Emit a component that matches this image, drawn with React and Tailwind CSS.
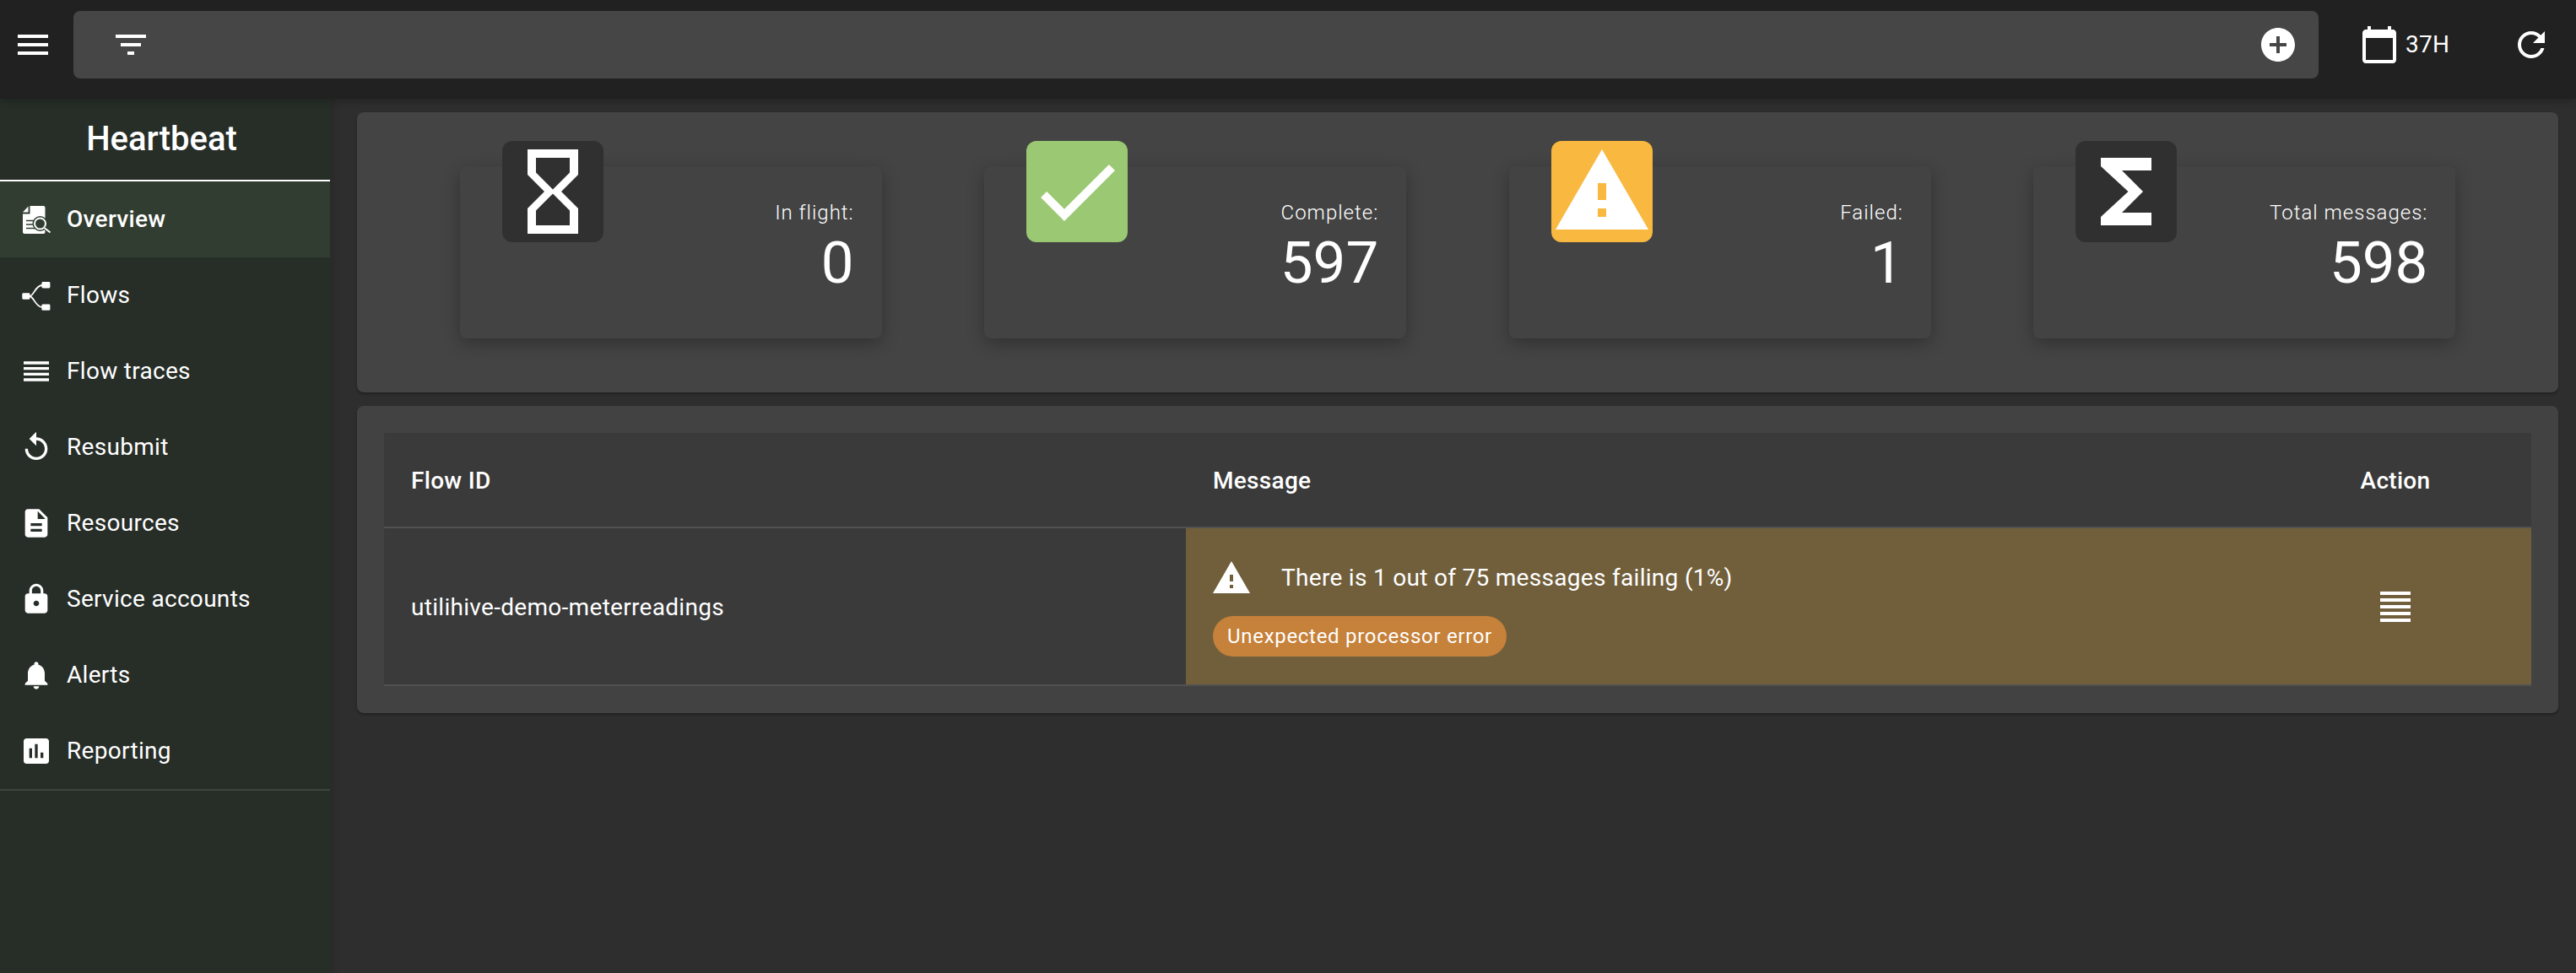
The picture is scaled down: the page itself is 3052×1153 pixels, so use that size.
import React from 'react';

const paths = {
  menu: 'M3 18h18v-2H3v2zm0-5h18v-2H3v2zm0-7v2h18V6H3z',
  filter: 'M10 18h4v-2h-4v2zM3 6v2h18V6H3zm3 7h12v-2H6v2z',
  add: 'M12 2C6.48 2 2 6.48 2 12s4.48 10 10 10 10-4.48 10-10S17.52 2 12 2zm5 11h-4v4h-2v-4H7v-2h4V7h2v4h4v2z',
  calendar: 'M20 3h-1V1h-2v2H7V1H5v2H4c-1.1 0-2 .9-2 2v16c0 1.1.9 2 2 2h16c1.1 0 2-.9 2-2V5c0-1.1-.9-2-2-2zm0 18H4V8h16v13z',
  refresh: 'M17.65 6.35C16.2 4.9 14.21 4 12 4c-4.42 0-7.99 3.58-7.99 8s3.57 8 7.99 8c3.73 0 6.84-2.55 7.73-6h-2.08c-.82 2.33-3.04 4-5.65 4-3.31 0-6-2.69-6-6s2.69-6 6-6c1.66 0 3.14.69 4.22 1.78L13 11h7V4l-2.35 2.35z',
  reorder: 'M3 15h18v-2H3v2zm0 4h18v-2H3v2zm0-8h18V9H3v2zm0-6v2h18V5H3z',
  replay: 'M12 5V1L7 6l5 5V7c3.31 0 6 2.69 6 6s-2.69 6-6 6-6-2.69-6-6H4c0 4.42 3.58 8 8 8s8-3.58 8-8-3.58-8-8-8z',
  description: 'M14 2H6c-1.1 0-1.99.9-1.99 2L4 20c0 1.1.89 2 1.99 2H18c1.1 0 2-.9 2-2V8l-6-6zm2 16H8v-2h8v2zm0-4H8v-2h8v2zm-3-5V3.5L18.5 9H13z',
  lock: 'M18 8h-1V6c0-2.76-2.24-5-5-5S7 3.24 7 6v2H6c-1.1 0-2 .9-2 2v10c0 1.1.9 2 2 2h12c1.1 0 2-.9 2-2V10c0-1.1-.9-2-2-2zm-6 9c-1.1 0-2-.9-2-2s.9-2 2-2 2 .9 2 2-.9 2-2 2zm3.1-9H8.9V6c0-1.71 1.39-3.1 3.1-3.1 1.71 0 3.1 1.39 3.1 3.1v2z',
  bell: 'M12 22c1.1 0 2-.9 2-2h-4c0 1.1.89 2 2 2zm6-6v-5c0-3.07-1.64-5.64-4.5-6.32V4c0-.83-.67-1.5-1.5-1.5s-1.5.67-1.5 1.5v.68C7.63 5.36 6 7.92 6 11v5l-2 2v1h16v-1l-2-2z',
  assessment: 'M19 3H5c-1.1 0-2 .9-2 2v14c0 1.1.9 2 2 2h14c1.1 0 2-.9 2-2V5c0-1.1-.9-2-2-2zM9 17H7v-7h2v7zm4 0h-2V7h2v10zm4 0h-2v-4h2v4z',
  hourglass: 'M6 2v6h.01L6 8.01 10 12l-4 4 .01.01H6V22h12v-5.99h-.01L18 16l-4-4 4-3.99-.01-.01H18V2H6zm10 14.5V20H8v-3.5l4-4 4 4zm-4-5l-4-4V4h8v3.5l-4 4z',
  check: 'M9 16.17L4.83 12l-1.41 1.41L9 19 21 7l-1.41-1.41z',
  warning: 'M1 21h22L12 2 1 21zm12-3h-2v-2h2v2zm0-4h-2v-4h2v4z',
  sigma: 'M18 4H6v2l6.5 6L6 18v2h12v-3h-7l5-5-5-5h7z',
  justify: 'M3 21h18v-2H3v2zm0-4h18v-2H3v2zm0-4h18v-2H3v2zm0-4h18V7H3v2zm0-6v2h18V3H3z',
};

const Icon = ({ name, className }) => (
  <svg viewBox="0 0 24 24" fill="currentColor" className={className}>
    <path d={paths[name]} />
  </svg>
);

const OverviewIcon = () => (
  <svg viewBox="7 6 40 40" className="w-[40px] h-[40px] shrink-0">
    <path d="M11 17.5 17.5 10.5V17.5Z" fill="white" />
    <path d="M19.5 10H35.5Q37.5 10 37.5 12V41Q37.5 43 35.5 43H13Q11 43 11 41V19.5H19.5Z" fill="white" />
    <path d="M15 27.5H25M15 32H23M15 36.5H25" stroke="#313d30" strokeWidth="1.6" />
    <circle cx="31.5" cy="31" r="9" fill="#313d30" />
    <circle cx="31.5" cy="31" r="6.5" fill="none" stroke="white" strokeWidth="2" />
    <path d="M36.5 36 43.5 41.5" stroke="#313d30" strokeWidth="4" />
    <path d="M36.5 36 43.5 41.5" stroke="white" strokeWidth="2" />
  </svg>
);

const FlowsIcon = () => (
  <svg viewBox="7 6 40 40" className="w-[40px] h-[40px] shrink-0">
    <rect x="10.3" y="23.3" width="9.2" height="7.4" rx="1.4" fill="white" />
    <rect x="33.4" y="10" width="10" height="7.4" rx="1.4" fill="white" />
    <rect x="33.4" y="36.4" width="10" height="7.4" rx="1.4" fill="white" />
    <path d="M19 27C24 27 26 14 34 14M19 27C24 27 26 40 34 40" fill="none" stroke="white" strokeWidth="1.8" />
  </svg>
);

const navItems = [
  { label: 'Overview', custom: <OverviewIcon />, active: true },
  { label: 'Flows', custom: <FlowsIcon /> },
  { label: 'Flow traces', icon: 'reorder' },
  { label: 'Resubmit', icon: 'replay' },
  { label: 'Resources', icon: 'description' },
  { label: 'Service accounts', icon: 'lock' },
  { label: 'Alerts', icon: 'bell' },
  { label: 'Reporting', icon: 'assessment' },
];

const stats = [
  { label: 'In flight:', value: '0', icon: 'hourglass', tile: 'bg-[#303030]' },
  { label: 'Complete:', value: '597', icon: 'check', tile: 'bg-[#9bc873]' },
  { label: 'Failed:', value: '1', icon: 'warning', tile: 'bg-[#f9b83f]' },
  { label: 'Total messages:', value: '598', icon: 'sigma', tile: 'bg-[#303030]' },
];

const StatCard = ({ label, value, icon, tile }) => (
  <div className="relative w-[500px] h-[204px] rounded-[8px] bg-[#434343] shadow-[0_6px_20px_rgba(0,0,0,0.28)] pr-[33px] pt-[38px] text-right text-white">
    <div className={`absolute left-[50px] top-[-30px] w-[120px] h-[120px] rounded-[12px] ${tile}`}>
      <Icon name={icon} className="w-[120px] h-[120px]" />
    </div>
    <div className="text-[24px] leading-[34px] font-light tracking-[1px]">{label}</div>
    <div className="text-[69px] leading-[86px] font-normal">{value}</div>
  </div>
);

const App = () => {
  return (
    <div className="h-screen flex flex-col overflow-hidden bg-[#2e2e2e] text-white font-['Roboto',sans-serif]">
      <header className="relative z-20 h-[117px] shrink-0 bg-[#212121] flex items-start pt-[13px] pl-[15px] shadow-[0_4px_8px_rgba(0,0,0,0.2)]">
        <div className="h-[80px] flex items-center">
          <Icon name="menu" className="w-[48px] h-[48px]" />
        </div>
        <div className="ml-[24px] w-[2660px] h-[80px] rounded-[8px] bg-[#464646] flex items-center justify-between pl-[44px] pr-[24px]">
          <Icon name="filter" className="w-[48px] h-[48px]" />
          <Icon name="add" className="w-[48px] h-[48px]" />
        </div>
        <div className="h-[80px] flex items-center ml-[48px]">
          <Icon name="calendar" className="w-[48px] h-[48px]" />
          <span className="ml-[7px] w-[51px] text-[28px] font-normal leading-none tracking-[0.3px]">37H</span>
          <Icon name="refresh" className="ml-[74px] w-[48px] h-[48px]" />
        </div>
      </header>

      <div className="flex flex-1 min-h-0">
        <aside className="relative z-10 w-[391px] shrink-0 bg-[#272e28] shadow-[4px_0_8px_rgba(0,0,0,0.12)]">
          <div className="h-[98px] border-b-2 border-white flex items-center justify-center pr-[8px] text-[40px] font-medium">
            Heartbeat
          </div>
          <nav className="border-b-2 border-[#3c453d]">
            {navItems.map((item) => (
              <div
                key={item.label}
                className={`h-[90px] flex items-center gap-[16px] pl-[23px] text-[28px] tracking-[0.3px] ${item.active ? 'bg-[#313d30] font-medium' : ''}`}
              >
                {item.custom || <Icon name={item.icon} className="w-[40px] h-[40px] shrink-0" />}
                <span>{item.label}</span>
              </div>
            ))}
          </nav>
        </aside>

        <main className="flex-1 pl-[32px] pr-[21px] pt-[16px]">
          <section className="h-[332px] rounded-[8px] bg-[#444444] shadow-[0_2px_3px_rgba(0,0,0,0.3)] flex items-center justify-evenly">
            {stats.map((stat) => (
              <StatCard key={stat.label} {...stat} />
            ))}
          </section>

          <section className="mt-[16px] rounded-[8px] bg-[#424242] p-[32px] shadow-[0_2px_3px_rgba(0,0,0,0.3)]">
            <div className="grid grid-cols-[950px_1272px_322px] bg-[#3a3a3a] text-[28px] tracking-[0.3px]">
              <div className="h-[113px] border-b-2 border-[#515151] flex items-center px-[32px] pt-[2px] font-medium">Flow ID</div>
              <div className="h-[113px] border-b-2 border-[#515151] flex items-center px-[32px] pt-[2px] font-medium">Message</div>
              <div className="h-[113px] border-b-2 border-[#515151] flex items-center justify-center pt-[2px] font-medium">Action</div>

              <div className="h-[187px] border-b-2 border-[#515151] flex items-center px-[32px] pt-[2px]">utilihive-demo-meterreadings</div>
              <div className="h-[187px] border-b-2 border-[#515151] bg-[#715f3c] px-[32px] pt-[35px]">
                <div className="flex items-center gap-[35px] h-[48px]">
                  <Icon name="warning" className="w-[48px] h-[48px] shrink-0 -ml-[2px]" />
                  <span>There is 1 out of 75 messages failing (1%)</span>
                </div>
                <div className="mt-[21px] inline-flex items-center h-[48px] rounded-full bg-[#c6813a] px-[17px] text-[24px] tracking-[0.7px]">
                  Unexpected processor error
                </div>
              </div>
              <div className="h-[187px] border-b-2 border-[#515151] bg-[#715f3c] flex items-center justify-center">
                <Icon name="justify" className="w-[48px] h-[48px]" />
              </div>
            </div>
          </section>
        </main>
      </div>
    </div>
  );
};

export default App;
